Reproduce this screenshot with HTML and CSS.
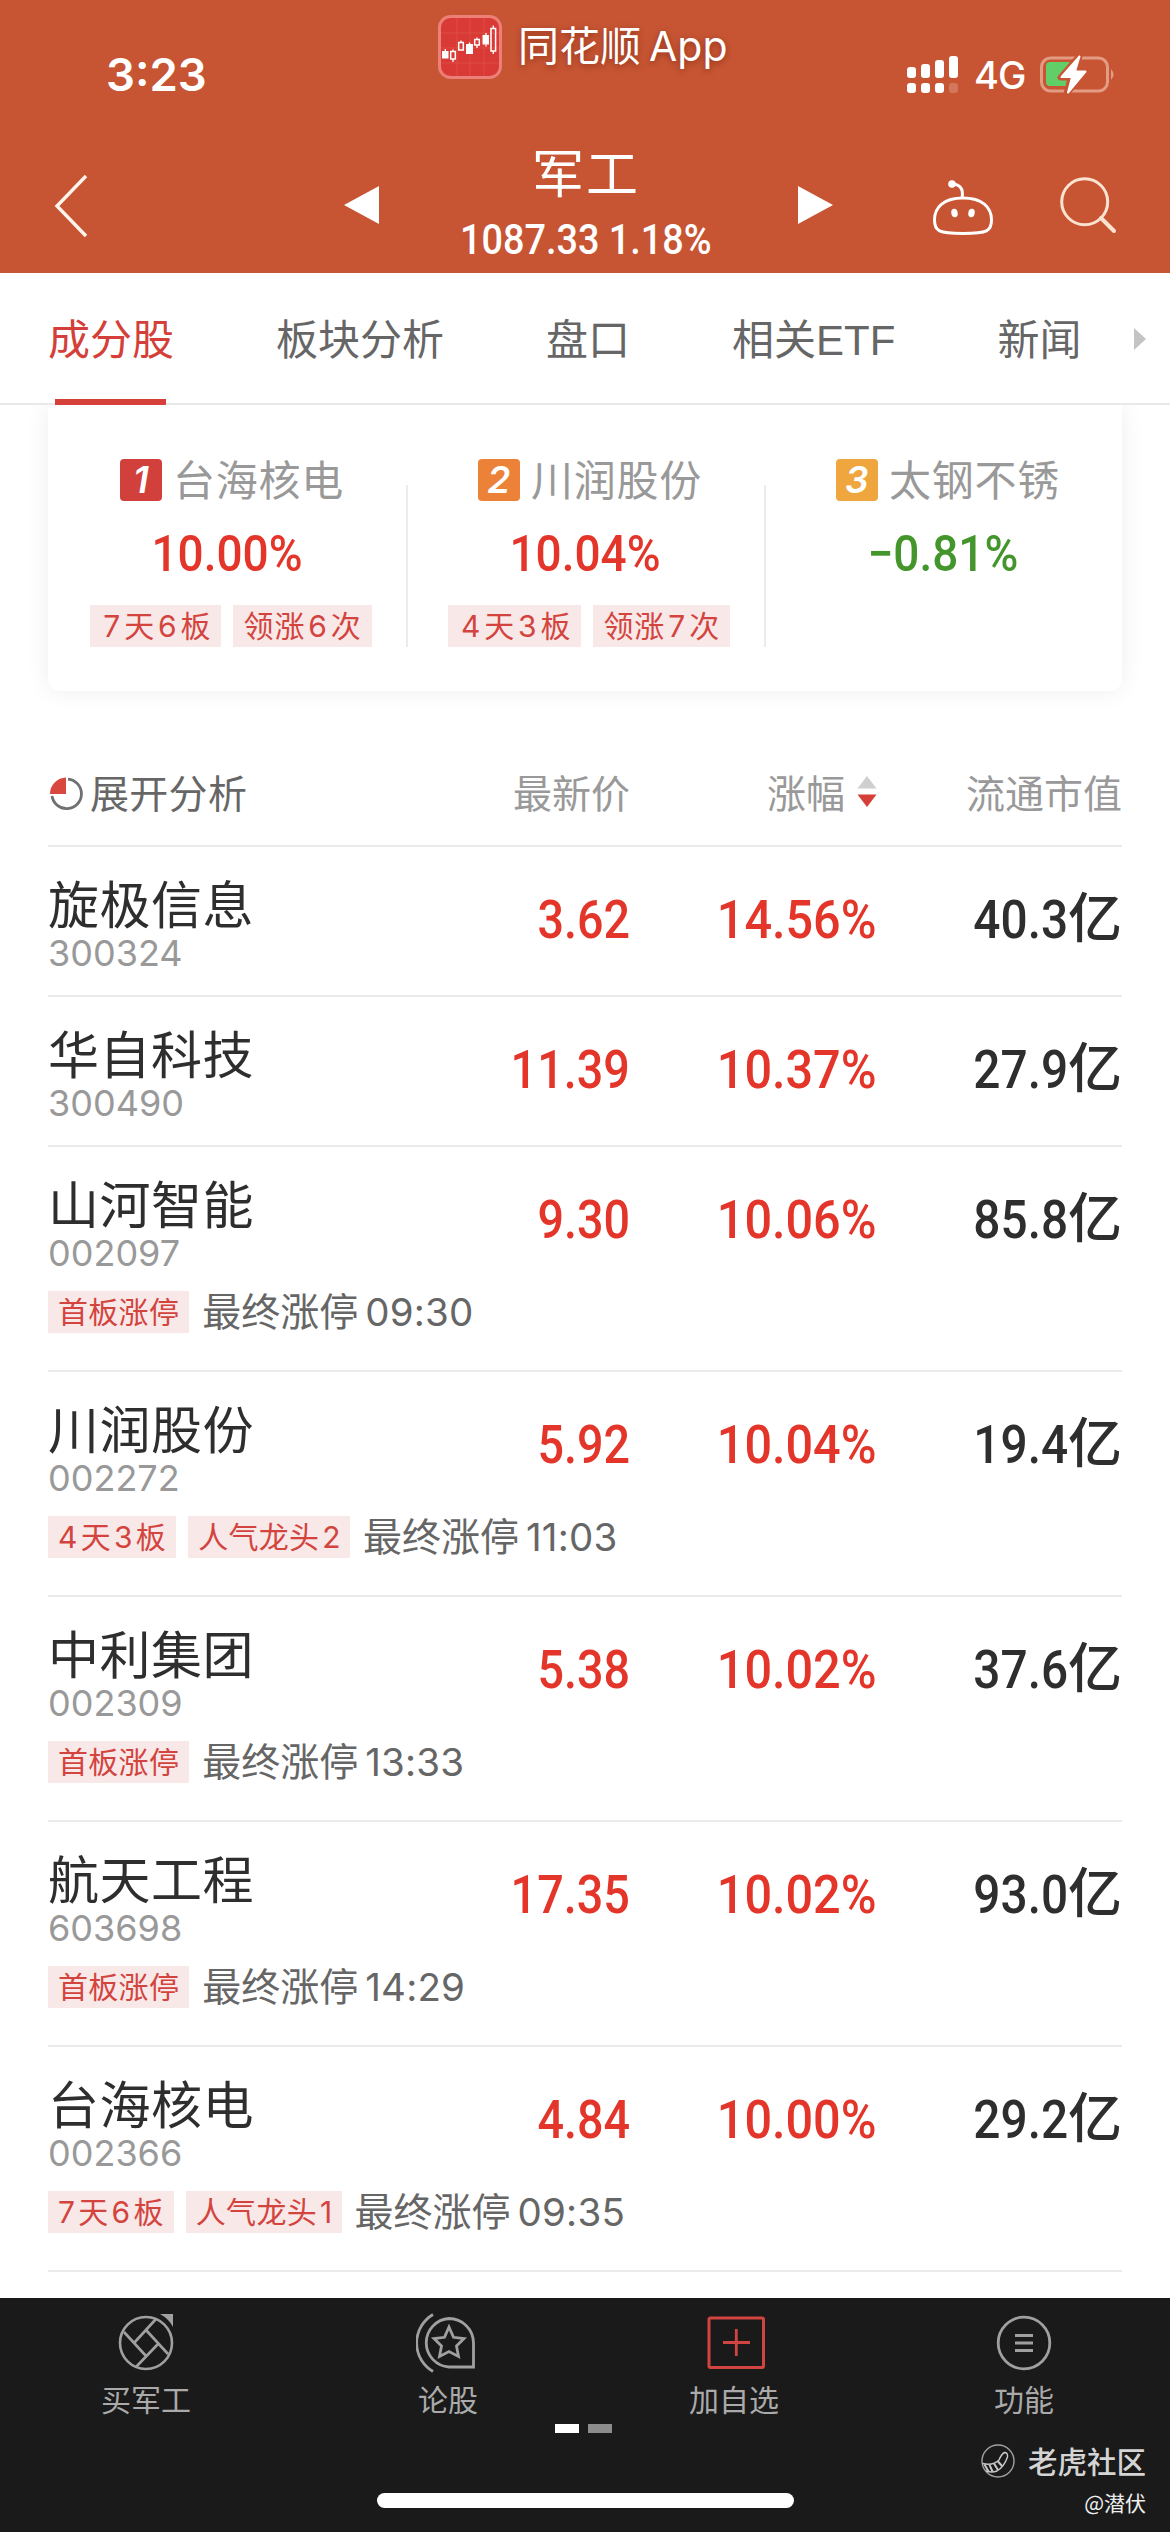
FILE: index.html
```html
<!DOCTYPE html>
<html lang="zh-CN">
<head>
<meta charset="utf-8">
<title>军工</title>
<link rel="stylesheet" href="styles.css">
</head>
<body>
<header class="header">
  <div class="status">
    <span class="time">3:23</span>
    <div class="brand">
      <svg class="brand-icon" width="64" height="64" viewBox="0 0 64 64">
        <rect x="1.5" y="1.5" width="61" height="61" rx="11" fill="#d93a35" stroke="#ec7f77" stroke-width="3"/>
        <path d="M3 18H61M3 33H61M3 48H61M19 3V61M32 3V61M46 3V61" stroke="#e05a50" stroke-width="1" opacity=".6"/>
        <g fill="#fff"><rect x="4" y="36" width="6.500" height="7.500"/><rect x="28" y="29" width="7" height="10"/><rect x="44.500" y="20" width="6.500" height="9.500"/></g>
        <path d="M12.700 36.500h4.600v7.500h-4.600zM20.700 27.500h4.600v7.500h-4.600zM36.700 24.500h4.600v5.500h-4.600zM53 13.500h4.600v22.500h-4.600z" fill="none" stroke="#fff" stroke-width="1.500"/>
        <path d="M7.300 34v2M15 34.500v2M15 44v3M23 25.500v2M31.500 27.500v2M39 22.500v2M39 30v3M48 18v2M48 29.500v2M55.300 10.500v3M55.300 36v3" stroke="#fff" stroke-width="1.300"/>
      </svg>
      <span class="brand-name">同花顺<span class="brand-app">App</span></span>
    </div>
    <div class="signals">
      <svg width="52" height="38" viewBox="0 0 52 38" fill="#fff">
        <rect x="0" y="11" width="9" height="11" rx="3"/><rect x="14" y="8" width="9" height="14" rx="3"/><rect x="28" y="4" width="9" height="18" rx="3"/><rect x="42" y="0" width="9" height="22" rx="3"/>
        <rect x="0" y="27" width="9" height="10" rx="3"/><rect x="14" y="27" width="9" height="10" rx="3"/><rect x="28" y="27" width="9" height="10" rx="3"/><rect x="42" y="27" width="9" height="10" rx="3" opacity=".2"/>
      </svg>
      <span class="net">4G</span>
      <svg width="76" height="40" viewBox="0 0 76 40">
        <rect x="1.500" y="3" width="66" height="33" rx="9" fill="none" stroke="#e39c84" stroke-width="3"/>
        <path d="M71 14q5 5.500 0 11z" fill="#e39c84"/>
        <path d="M10 7H30L20 22l7 2-1 7H10q-4 0-4-4V11q0-4 4-4z" fill="#62ce67"/>
        <path d="M39.500 1L20.500 22.500H31L26.500 38.500 46.500 16H35.500z" fill="#fff" stroke="#c75533" stroke-width="6" stroke-linejoin="round"/>
        <path d="M39.500 1.500L21.500 22H32L28 37.500 45.500 16.500H35z" fill="#fff" stroke="#fff" stroke-width="2" stroke-linejoin="round"/>
      </svg>
    </div>
  </div>
  <div class="nav">
    <svg class="back" width="34" height="64" viewBox="0 0 34 64"><path d="M32 2L3 32 32 62" fill="none" stroke="#fff5ec" stroke-width="3.400"/></svg>
    <svg class="prev" width="36" height="38" viewBox="0 0 36 38"><path d="M35 0V38L0 19z" fill="#fff"/></svg>
    <div class="title">
      <h1 class="title-name">军工</h1>
      <div class="title-quote"><span>1087.33 1.18%</span></div>
    </div>
    <svg class="next" width="36" height="38" viewBox="0 0 36 38"><path d="M1 0V38L36 19z" fill="#fff"/></svg>
    <svg class="robot" width="62" height="58" viewBox="0 0 62 58">
      <path d="M31 20C50 20 59.500 29 59.500 42c0 11-4 13.500-28.500 13.500S2.500 53 2.500 42C2.500 29 12 20 31 20z" fill="none" stroke="#fff" stroke-width="3"/>
      <path d="M20 6c7 0 12 4 10 14" fill="none" stroke="#fff" stroke-width="3"/><circle cx="20" cy="6" r="3.800" fill="#fff"/>
      <ellipse cx="22.500" cy="35" rx="3.200" ry="4.300" fill="#fff" transform="rotate(-10 22.500 35)"/><ellipse cx="39.500" cy="35" rx="3.200" ry="4.300" fill="#fff" transform="rotate(10 39.500 35)"/>
    </svg>
    <svg class="search" width="58" height="58" viewBox="0 0 58 58"><circle cx="25.700" cy="25.700" r="23" fill="none" stroke="#fbe3d2" stroke-width="3"/><path d="M42 42L55 55" stroke="#fbe3d2" stroke-width="4" stroke-linecap="round"/></svg>
  </div>
</header>

<nav class="tabs">
  <span class="tab active">成分股</span><span class="tab">板块分析</span><span class="tab">盘口</span><span class="tab">相关<span class="latin">ETF</span></span><span class="tab">新闻</span>
  <svg class="more" width="12" height="22" viewBox="0 0 12 22"><path d="M0 0L12 11 0 22z" fill="#c4c4c4"/></svg>
</nav>

<main class="content">
  <div class="card-clip">
    <section class="card">
      <div class="leader">
        <div class="leader-head"><span class="rank rank1">1</span><span class="leader-name">台海核电</span></div>
        <div class="leader-pct up"><span>10.00%</span></div>
        <div class="tags"><span class="tag"><i>7</i>天<i>6</i>板</span><span class="tag">领涨<i>6</i>次</span></div>
      </div>
      <div class="leader">
        <div class="leader-head"><span class="rank rank2">2</span><span class="leader-name">川润股份</span></div>
        <div class="leader-pct up"><span>10.04%</span></div>
        <div class="tags"><span class="tag"><i>4</i>天<i>3</i>板</span><span class="tag">领涨<i>7</i>次</span></div>
      </div>
      <div class="leader">
        <div class="leader-head"><span class="rank rank3">3</span><span class="leader-name">太钢不锈</span></div>
        <div class="leader-pct down"><span>−0.81%</span></div>
      </div>
    </section>
  </div>

  <div class="thead">
    <div class="expand">
      <svg width="34" height="36" viewBox="0 0 34 36"><path d="M19 3.100A14.800 14.800 0 1 1 3 20" fill="none" stroke="#707070" stroke-width="2.800"/><path d="M17 18H1A16.500 16.500 0 0 1 17 1.500z" fill="#d9483e"/></svg>
      <span>展开分析</span>
    </div>
    <span class="h-price">最新价</span>
    <span class="h-pct">涨幅<svg width="20" height="32" viewBox="0 0 20 32"><path d="M10 0L19.500 12.500H0.500z" fill="#cfcfcf"/><path d="M10 31L19.500 18.500H0.500z" fill="#d63f38"/></svg></span>
    <span class="h-cap">流通市值</span>
  </div>

  <div class="row">
    <div class="stock"><div class="name">旋极信息</div><div class="code">300324</div></div>
    <div class="num price"><span>3.62</span></div><div class="num pct"><span>14.56%</span></div><div class="num cap"><span>40.3</span>亿</div>
  </div>
  <div class="row">
    <div class="stock"><div class="name">华自科技</div><div class="code">300490</div></div>
    <div class="num price"><span>11.39</span></div><div class="num pct"><span>10.37%</span></div><div class="num cap"><span>27.9</span>亿</div>
  </div>
  <div class="row tall">
    <div class="stock"><div class="name">山河智能</div><div class="code">002097</div></div>
    <div class="num price"><span>9.30</span></div><div class="num pct"><span>10.06%</span></div><div class="num cap"><span>85.8</span>亿</div>
    <div class="note"><span class="tag">首板涨停</span><span class="final">最终涨停<span class="clock">09:30</span></span></div>
  </div>
  <div class="row tall">
    <div class="stock"><div class="name">川润股份</div><div class="code">002272</div></div>
    <div class="num price"><span>5.92</span></div><div class="num pct"><span>10.04%</span></div><div class="num cap"><span>19.4</span>亿</div>
    <div class="note"><span class="tag"><i>4</i>天<i>3</i>板</span><span class="tag">人气龙头<i>2</i></span><span class="final">最终涨停<span class="clock">11:03</span></span></div>
  </div>
  <div class="row tall">
    <div class="stock"><div class="name">中利集团</div><div class="code">002309</div></div>
    <div class="num price"><span>5.38</span></div><div class="num pct"><span>10.02%</span></div><div class="num cap"><span>37.6</span>亿</div>
    <div class="note"><span class="tag">首板涨停</span><span class="final">最终涨停<span class="clock">13:33</span></span></div>
  </div>
  <div class="row tall">
    <div class="stock"><div class="name">航天工程</div><div class="code">603698</div></div>
    <div class="num price"><span>17.35</span></div><div class="num pct"><span>10.02%</span></div><div class="num cap"><span>93.0</span>亿</div>
    <div class="note"><span class="tag">首板涨停</span><span class="final">最终涨停<span class="clock">14:29</span></span></div>
  </div>
  <div class="row tall">
    <div class="stock"><div class="name">台海核电</div><div class="code">002366</div></div>
    <div class="num price"><span>4.84</span></div><div class="num pct"><span>10.00%</span></div><div class="num cap"><span>29.2</span>亿</div>
    <div class="note"><span class="tag"><i>7</i>天<i>6</i>板</span><span class="tag">人气龙头<i>1</i></span><span class="final">最终涨停<span class="clock">09:35</span></span></div>
  </div>
</main>

<footer class="footer">
  <div class="actions">
    <div class="action">
      <svg width="64" height="64" viewBox="0 0 64 64" fill="none" stroke="#a0a0a0" stroke-width="2.600"><circle cx="32" cy="32" r="26"/><path d="M42 8L20 32M10 21L32 45M54 43L32 19M22 56L44 33"/><path d="M46 3H59V16Q55 8 46 3z" fill="#a0a0a0" stroke="none"/></svg>
      <span>买军工</span>
    </div>
    <div class="action">
      <svg width="64" height="64" viewBox="0 0 64 64" fill="none" stroke="#a0a0a0" stroke-width="2.800"><path d="M33 7.500A24.300 24.300 0 0 0 33 56H57.500V32A24.500 24.500 0 0 0 33 7.500z"/><path d="M17 3.500A33 33 0 0 0 17 60.500"/><path d="M33 16L37.500 26.300 48 27.500 40.500 35 42.500 45.500 33 40.500 23.500 45.500 25.500 35 18 27.500 28.500 26.300z"/></svg>
      <span>论股</span>
    </div>
    <div class="action">
      <svg width="64" height="64" viewBox="0 0 64 64" fill="none" stroke="#d2443f"><rect x="7" y="7" width="54.500" height="49.500" rx="1.500" stroke-width="3"/><path d="M34.300 18V45M21 31.500H48" stroke-width="2.800"/></svg>
      <span>加自选</span>
    </div>
    <div class="action">
      <svg width="64" height="64" viewBox="0 0 64 64" fill="none" stroke="#a0a0a0" stroke-width="2.800"><circle cx="32" cy="32" r="25.800"/><path d="M23 24.500H41M23 32H41M23 39.500H41"/></svg>
      <span>功能</span>
    </div>
  </div>
  <div class="pager"><i class="on"></i><i></i></div>
  <div class="mark">
    <svg width="36" height="36" viewBox="0 0 36 36" fill="none" stroke="#a0a0a0" stroke-width="1.400"><circle cx="18" cy="18" r="16"/><path d="M2.500 20.500Q13 23 19 17Q21.500 11 24.500 9.500Q28 9.500 27.500 14Q24 24 17 28Q12 30 6 28" stroke="#c8c8c8"/><path d="M4.500 21.500L8.500 28.500M9.500 21.800L12.500 28.500M14 20.500L18 27M18 18.500L22 23" stroke="#c8c8c8" stroke-width="2"/></svg>
    <span>老虎社区</span>
  </div>
  <div class="author">@潜伏</div>
  <div class="home"></div>
</footer>
</body>
</html>
```
FILE: styles.css
```css
* { box-sizing: border-box; }
body {
  margin: 0;
  width: 1170px;
  height: 2532px;
  overflow: hidden;
  background: #fff;
  font-family: "Noto Sans CJK SC", sans-serif;
  display: flex;
  flex-direction: column;
}
svg { display: block; flex: none; }

.header { height: 273px; background: #c75533; color: #fff; flex: none; }
.status { height: 116px; display: grid; grid-template-columns: 438px 469px 263px; align-items: start; }
.time { font: 600 45.5px/50px Inter, sans-serif; padding: 50px 0 0 106px; }
.brand { display: flex; align-items: flex-start; gap: 16px; padding-top: 15px; text-shadow: 0 2px 6px rgba(90, 20, 0, .5); }
.brand-name { font-size: 41px; line-height: 60px; margin-top: -2px; white-space: nowrap; }
.brand-app { font: 400 41px/60px Inter, sans-serif; margin-left: 8px; }
.signals { display: flex; align-items: center; padding-top: 55px; height: 95px; }
.net { font: 500 38px/40px Inter, sans-serif; margin: 0 15px 0 15px; width: 51px; letter-spacing: -1px; }

.nav { height: 157px; display: grid; grid-template-columns: 54px 290px 35px 418px 36px 99px 127px 111px; }
.back { grid-column: 2; margin-top: 58px; }
.prev { grid-column: 3; margin-top: 70px; }
.title { grid-column: 4; text-align: center; padding-right: 4px; }
.title-name { margin: 20px 0 0; font-size: 52px; font-weight: 400; line-height: 70px; letter-spacing: 2px; }
.title-quote { margin-top: 9px; font: 500 42px/50px Roboto, sans-serif; }
.title-quote span { display: inline-block; transform: scaleX(.9); }
.next { grid-column: 5; margin-top: 70px; }
.robot { grid-column: 7; margin-top: 62px; }
.search { grid-column: 8; margin-top: 60px; }

.tabs { height: 132px; flex: none; display: flex; gap: 102px; padding-left: 48px; border-bottom: 2px solid #e9e9e9; font-size: 42px; line-height: 127px; color: #666; white-space: nowrap; }
.tab.active { color: #d43f3a; position: relative; }
.tab.active::after { content: ""; position: absolute; left: 7px; bottom: -2px; width: 111px; height: 6px; background: #d5403b; }
.latin { font-family: "Liberation Sans", sans-serif; font-size: 42px; }
.more { margin: 55px 0 0 -49px; }

.content { flex: none; height: 1893px; }
.card-clip { height: 341px; overflow: hidden; padding: 0 48px; }
.card { height: 286px; border-radius: 0 0 12px 12px; background: #fff; box-shadow: 0 0 24px rgba(0, 0, 0, .07); display: grid; grid-template-columns: repeat(3, 358px); padding-top: 48px; }
.leader { position: relative; display: flex; flex-direction: column; align-items: center; }
.leader + .leader::before { content: ""; position: absolute; left: 0; top: 32px; width: 2px; height: 162px; background: #ececec; }
.leader-head { display: flex; align-items: center; gap: 11px; height: 54px; font-size: 42px; line-height: 50px; color: #999; padding-left: 10px; }
.leader-name { letter-spacing: .8px; padding-bottom: 5px; }
.rank { width: 42px; height: 42px; border-radius: 4px; color: #fff; font: italic 600 37px/42px Inter, sans-serif; text-align: center; }
.rank1 { background: #d2403c; }
.rank2 { background: #ec8238; }
.rank3 { background: #f0a63f; }
.leader-pct { margin-top: 17px; height: 60px; font: 500 50.5px/60px Roboto, sans-serif; }
.leader-pct span { display: inline-block; transform: scaleX(.91); }
.up { color: #e33529; }
.down { color: #44952b; }
.tags { display: flex; gap: 12px; margin-top: 21px; padding-left: 8px; }
.tag { height: 42px; padding: 0 10px; background: #f9e8e8; color: #d3443e; font: 400 30px/42px Inter, "Noto Sans CJK SC", sans-serif; letter-spacing: .5px; white-space: nowrap; }
.tag i { font-style: normal; margin: 0 3px; }
.tags .tag { letter-spacing: .9px; }
.note .tag i:only-child { margin: 0 -1px 0 3px; }
.note .tag i:first-child:not(:only-child) { margin-left: 0; }
.note .tag { letter-spacing: .3px; }

.thead { height: 101px; margin: 0 48px; border-bottom: 2px solid #ebebeb; display: grid; grid-template-columns: 300px 282px 247px 245px; font-size: 39px; line-height: 90px; color: #999; text-align: right; }
.expand { display: flex; align-items: center; gap: 7px; color: #666; height: 96px; padding-left: 1px; }
.expand span { margin-top: -6px; letter-spacing: .3px; }
.h-pct { display: flex; justify-content: flex-end; gap: 12px; }
.h-pct svg { margin-top: 30px; }

.row { height: 150px; margin: 0 48px; border-bottom: 2px solid #ebebeb; display: grid; grid-template-columns: 300px 282px 247px 245px; grid-template-rows: 148px; }
.tall { height: 225px; grid-template-rows: 148px 75px; }
.name { margin-top: 27px; font-size: 51px; line-height: 56px; color: #2e2e2e; letter-spacing: .5px; }
.code { font: 400 36px/36px Inter, sans-serif; color: #999; letter-spacing: 0; margin-top: 5px; }
.num { font: 500 54px/64px Roboto, "Noto Sans CJK SC", sans-serif; text-align: right; padding-top: 41px; color: #e33529; white-space: nowrap; }
.num span { display: inline-block; transform: scaleX(.9); transform-origin: right; }
.price span { transform: scaleX(.865); }
.cap { color: #2e2e2e; }
.cap span { transform: scaleX(.885); }
.note { grid-column: 1 / -1; display: flex; align-items: flex-start; gap: 12px; margin-top: -4px; }
.final { font-size: 39px; line-height: 42px; color: #666; white-space: nowrap; margin: -3px 0 0 1px; }
.clock { font: 400 38.5px/42px Inter, sans-serif; margin-left: 7px; letter-spacing: .2px; }

.footer { position: relative; height: 234px; background: #1a1a1a; flex: none; color: #aaa; overflow: hidden; }
.actions { display: grid; grid-template-columns: 292px 312px 260px 320px; }
.action { display: flex; flex-direction: column; align-items: center; padding-top: 13px; font-size: 30px; line-height: 44px; }
.action span { margin: 1px 0 3px; }
.pager { display: flex; gap: 9px; padding-left: 555px; margin-top: 1px; }
.pager i { width: 24px; height: 9px; background: #8c8c8c; }
.pager .on { background: #fff; }
.mark { position: absolute; right: 24px; top: 144px; display: flex; align-items: center; gap: 12px; font-size: 29.5px; font-weight: 500; line-height: 40px; color: #d4d4d4; }
.mark span { margin-top: -2px; }
.author { position: absolute; right: 24px; top: 188px; font-size: 21px; line-height: 32px; color: #eee; }
.home { width: 417px; height: 15px; border-radius: 8px; background: #fff; margin: 60px 0 0 377px; }
```
